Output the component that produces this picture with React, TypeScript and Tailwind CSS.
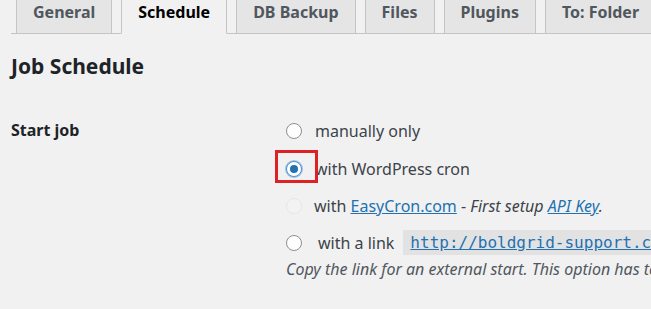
const tabs = ["General", "Schedule", "DB Backup", "Files", "Plugins", "To: Folder"];

function Radio({ checked, disabled }: { checked?: boolean; disabled?: boolean }) {
  if (disabled) {
    return <span className="block h-4 w-4 shrink-0 rounded-full border border-[#e6e6e6] bg-[#f3f3f3]" />;
  }
  return (
    <span
      className={
        "flex h-4 w-4 shrink-0 items-center justify-center rounded-full border bg-white " +
        (checked ? "border-[#4f94d4] shadow-[0_0_0_1px_#9ec2e6]" : "border-[#8c8f94]")
      }
    >
      {checked && <span className="block h-2 w-2 rounded-full bg-[#2271b1]" />}
    </span>
  );
}

export default function App() {
  return (
    <div
      className="h-[309px] w-[651px] overflow-hidden bg-[#f1f1f1] text-[#3c434a]"
      style={{ fontFamily: '"Noto Sans", "Open Sans", sans-serif' }}
    >
      <div className="ml-[11px] flex h-[34px] items-end gap-[9px] border-b border-[#c3c4c7] pl-[5px]">
        {tabs.map((tab) => {
          const active = tab === "Schedule";
          return (
            <div
              key={tab}
              className={
                "-mb-px flex h-[34px] shrink-0 items-center whitespace-nowrap border-x border-b px-[16px] pb-[10px] text-[16px] font-bold " +
                (active
                  ? "border-x-[#c3c4c7] border-b-[#f1f1f1] bg-[#f1f1f1] text-black"
                  : "border-x-[#c3c4c7] border-b-[#c3c4c7] bg-[#e5e5e5] text-[#50575e]")
              }
            >
              {tab}
            </div>
          );
        })}
      </div>

      <h2 className="ml-[11px] mt-[18px] text-[21px] font-bold leading-[28px] text-[#1d2327]">Job Schedule</h2>

      <div className="mt-[32px] flex">
        <div className="w-[286px] shrink-0 pl-[11px] pt-[6px] text-[16px] font-bold leading-[24px] text-[#1d2327]">
          Start job
        </div>
        <div className="flex min-w-0 flex-col text-[16px] leading-[24px]">
          <div className="flex h-[38px] items-center gap-[13px]">
            <Radio />
            <span className="whitespace-nowrap">manually only</span>
          </div>
          <div className="relative flex h-[37px] items-center gap-[13px]">
            <Radio checked />
            <span className="whitespace-nowrap">with WordPress cron</span>
            <span className="absolute left-[-11px] top-0 h-[33px] w-[43px] border-[3px] border-[#dc2127]" />
          </div>
          <div className="flex h-[37px] items-center gap-[12px]">
            <Radio disabled />
            <span className="whitespace-nowrap">
              with <span className="text-[#2271b1] underline">EasyCron.com</span> -{" "}
              <em>
                First setup <span className="text-[#2271b1] underline">API Key</span>.
              </em>
            </span>
          </div>
          <div className="flex h-[37px] items-center">
            <Radio />
            <span className="ml-[16px] whitespace-nowrap">with a link</span>
            <span
              className="ml-[9px] flex h-[25px] shrink-0 items-center whitespace-nowrap bg-[#e2e2e2] pl-[7px] pr-2 text-[16px] text-[#2271b1] underline"
              style={{ fontFamily: '"DejaVu Sans Mono", monospace' }}
            >
              http://boldgrid-support.com/wp-cron.php
            </span>
          </div>
          <p className="-mt-[4px] whitespace-nowrap italic text-[#50575e]">
            Copy the link for an external start. This option has to be activated.
          </p>
        </div>
      </div>
    </div>
  );
}
